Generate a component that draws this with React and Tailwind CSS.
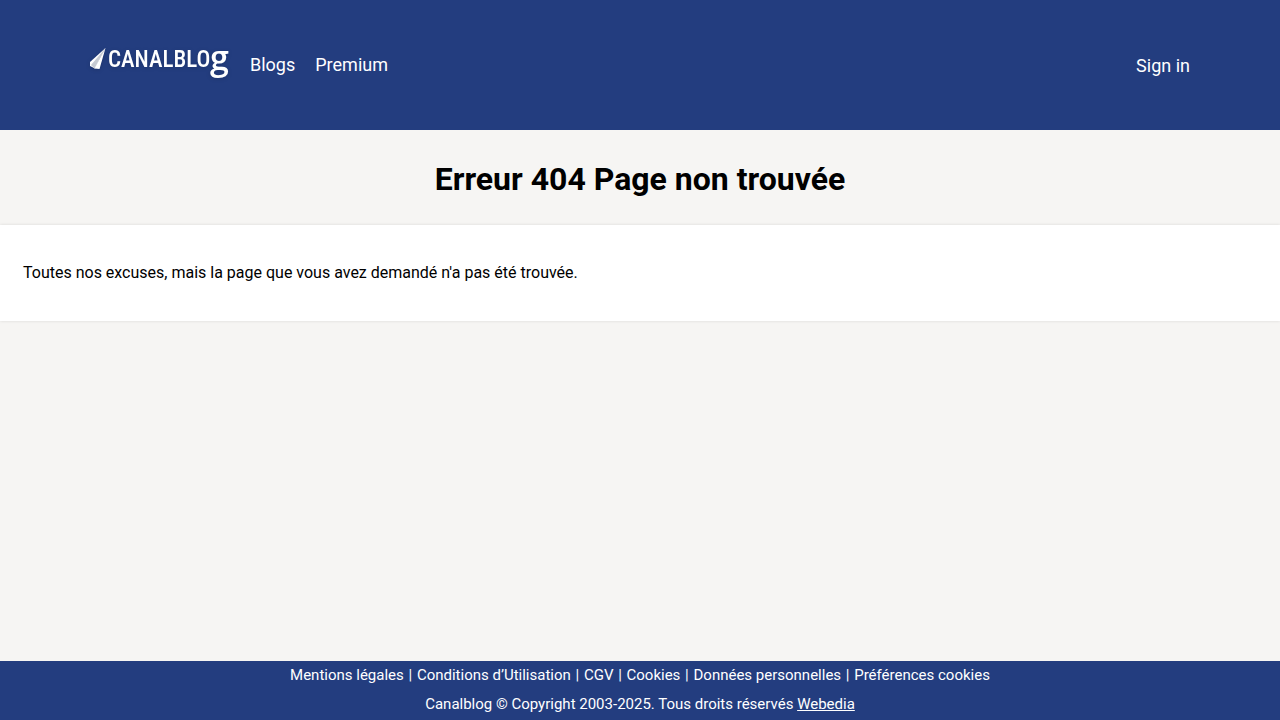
import React from 'react';

const navLinks = [
  { label: 'Blogs', href: '#blogs' },
  { label: 'Premium', href: '#premium' },
];

const footerLinks = [
  { label: 'Mentions légales', href: '#mentions-legales' },
  { label: 'Conditions d’Utilisation', href: '#conditions' },
  { label: 'CGV', href: '#cgv' },
  { label: 'Cookies', href: '#cookies' },
  { label: 'Données personnelles', href: '#donnees-personnelles' },
  { label: 'Préférences cookies', href: '#preferences' },
];

const Logo = () => (
  <svg width="144" height="72" viewBox="0 0 144 72" role="img" aria-label="Canalblog" className="block overflow-visible drop-shadow-sm">
    {/* Paper plane */}
    <path d="M15.5 19 L0 33 L0 37 L4 39 Z" fill="#ffffff" />
    <path d="M15.5 19 L1 36 L5 40 Z" fill="#c6cad2" />
    <path d="M15.5 19 L4.5 39.5 L9.5 40 Z" fill="#ffffff" />
    <text x="18" y="38" fill="#ffffff" className="font-['Roboto_Condensed','Liberation_Sans_Narrow',sans-serif] text-[23px] font-medium">
      CANALBLO
    </text>
    <text x="120" y="41" fill="#ffffff" className="font-['Open_Sans',sans-serif] text-[34px] font-semibold">
      g
    </text>
  </svg>
);

const Header = () => (
  <header className="bg-[#233d7f] text-white">
    <div className="max-w-[1100px] h-[130px] mx-auto flex items-center justify-between text-lg">
      <div className="flex items-center gap-4">
        <a href="#accueil">
          <Logo />
        </a>
        <nav className="flex gap-5">
          {navLinks.map((link) => (
            <a key={link.label} href={link.href}>{link.label}</a>
          ))}
        </nav>
      </div>
      <a href="#sign-in" className="pt-0.5">Sign in</a>
    </div>
  </header>
);

const Footer = () => (
  <footer className="bg-[#233d7f] text-white text-center text-[15px] leading-[29px] pb-px">
    <p>
      {footerLinks.map((link, index) => (
        <React.Fragment key={link.label}>
          {index > 0 && <span className="mx-px"> | </span>}
          <a href={link.href}>{link.label}</a>
        </React.Fragment>
      ))}
    </p>
    <p>
      Canalblog © Copyright 2003-2025. Tous droits réservés{' '}
      <a href="#webedia" className="underline">Webedia</a>
    </p>
  </footer>
);

const App = () => (
  <div className="min-h-screen flex flex-col bg-[#f6f5f3] text-black font-['Roboto',sans-serif]">
    <Header />
    <main className="flex-1">
      <h1 className="pt-[30px] pb-[26px] text-center text-[32px] leading-[39px] font-bold">Erreur 404 Page non trouvée</h1>
      <section className="bg-white px-[23px] py-9 shadow-[0_0_3px_rgba(0,0,0,0.12)]">
        <p className="text-base">Toutes nos excuses, mais la page que vous avez demandé n'a pas été trouvée.</p>
      </section>
    </main>
    <Footer />
  </div>
);

export default App;
